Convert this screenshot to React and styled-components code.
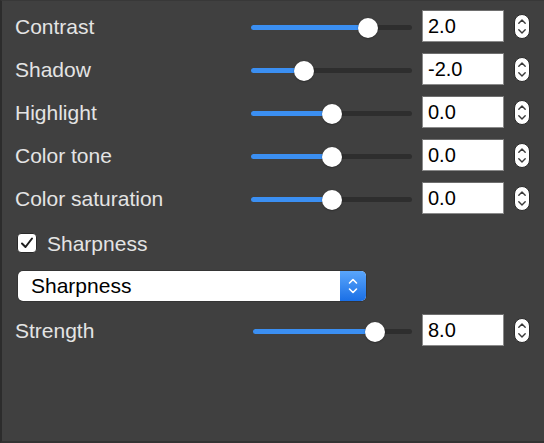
import React from "react";
import styled, { createGlobalStyle } from "styled-components";

const GlobalStyle = createGlobalStyle`
  html, body {
    margin: 0;
    padding: 0;
    background: #404040;
  }
  body {
    font-family: "Liberation Sans", Arial, Helvetica, sans-serif;
  }
`;

const controls = [
  { label: "Contrast", value: "2.0", pos: 0.727 },
  { label: "Shadow", value: "-2.0", pos: 0.329 },
  { label: "Highlight", value: "0.0", pos: 0.503 },
  { label: "Color tone", value: "0.0", pos: 0.503 },
  { label: "Color saturation", value: "0.0", pos: 0.503 },
];

function Stepper() {
  return (
    <StepperBox>
      <svg width="16" height="25" viewBox="0 0 16 25">
        <rect x="0.5" y="0.5" width="15" height="24" rx="7.5" fill="#fff" stroke="#2a2a2a" strokeWidth="1" />
        <path d="M4.8 9.3 L8 6.1 L11.2 9.3" fill="none" stroke="#3a3a3a" strokeWidth="1.4" strokeLinecap="round" strokeLinejoin="round" />
        <path d="M4.8 15.7 L8 18.9 L11.2 15.7" fill="none" stroke="#3a3a3a" strokeWidth="1.4" strokeLinecap="round" strokeLinejoin="round" />
      </svg>
    </StepperBox>
  );
}

function Slider({ pos }) {
  return (
    <SliderWrap>
      <Track>
        <Fill style={{ width: `${pos * 100}%` }} />
        <Thumb style={{ left: `${pos * 100}%` }} />
      </Track>
    </SliderWrap>
  );
}

function ControlRow({ label, value, pos, shift }) {
  return (
    <Row $shift={shift}>
      <Label>{label}</Label>
      <Slider pos={pos} />
      <NumberBox>{value}</NumberBox>
      <Stepper />
    </Row>
  );
}

export default function App() {
  return (
    <>
      <GlobalStyle />
      <Panel>
        {controls.map(c => (
          <ControlRow key={c.label} {...c} />
        ))}
        <CheckRow>
          <CheckBox>
            <svg width="14" height="12" viewBox="0 0 14 12">
              <path d="M2 6.5 L5.5 10 L12 1.5" fill="none" stroke="#1e1e1e" strokeWidth="2" strokeLinecap="round" strokeLinejoin="round" />
            </svg>
          </CheckBox>
          <Label>Sharpness</Label>
        </CheckRow>
        <SelectRow>
          <Select>
            <SelectText>Sharpness</SelectText>
            <SelectArrows>
              <svg width="12" height="18" viewBox="0 0 12 18">
                <path d="M2.5 6 L6 2.5 L9.5 6" fill="none" stroke="#fff" strokeWidth="1.6" strokeLinecap="round" strokeLinejoin="round" />
                <path d="M2.5 12 L6 15.5 L9.5 12" fill="none" stroke="#fff" strokeWidth="1.6" strokeLinecap="round" strokeLinejoin="round" />
              </svg>
            </SelectArrows>
          </Select>
        </SelectRow>
        <ControlRow label="Strength" value="8.0" pos={0.767} shift />
      </Panel>
    </>
  );
}

const Panel = styled.div`
  box-sizing: border-box;
  width: 544px;
  height: 443px;
  background: #404040;
  border-left: 2px solid #2c2c2c;
  border-top: 1px solid #383838;
  border-bottom: 2px solid #333;
  padding: 9px 0 0;
  display: flex;
  flex-direction: column;
  gap: 11px;
`;

const Row = styled.div`
  display: grid;
  grid-template-columns: 1fr ${p => (p.$shift ? "159px" : "161px")} 82px 16px;
  column-gap: 10px;
  align-items: center;
  height: 32px;
  padding: 0 14px 0 13px;
  margin-top: ${p => (p.$shift ? "2px" : "0")};
`;

const Label = styled.div`
  color: #e4e4e4;
  font-size: 21px;
  line-height: 24px;
  padding-top: 2px;
  white-space: nowrap;
`;

const SliderWrap = styled.div`
  height: 20px;
  display: flex;
  align-items: center;
  margin-top: 3px;
`;

const Track = styled.div`
  position: relative;
  width: 100%;
  height: 5px;
  border-radius: 3px;
  background: #2e2e2e;
`;

const Fill = styled.div`
  height: 100%;
  border-radius: 3px;
  background: #3b8ff2;
`;

const Thumb = styled.div`
  position: absolute;
  top: 50%;
  width: 20px;
  height: 20px;
  margin: -10px 0 0 -10px;
  border-radius: 50%;
  background: #fff;
  box-shadow: 0 0.5px 1.5px rgba(0, 0, 0, 0.5);
`;

const NumberBox = styled.div`
  box-sizing: border-box;
  height: 32px;
  background: #fff;
  border: 1px solid #8a8a8a;
  border-top-color: #6e6e6e;
  color: #000;
  font-size: 20px;
  line-height: 30px;
  padding-left: 5px;
`;

const StepperBox = styled.div`
  display: flex;
  height: 25px;
`;

const CheckRow = styled.div`
  display: flex;
  align-items: center;
  gap: 10px;
  height: 24px;
  padding-left: 15px;
  margin-top: 6px;
`;

const CheckBox = styled.div`
  box-sizing: border-box;
  width: 20px;
  height: 20px;
  border-radius: 4px;
  background: #fff;
  border: 1px solid #2a2a2a;
  display: flex;
  align-items: center;
  justify-content: center;
`;

const SelectRow = styled.div`
  padding-left: 16px;
  margin-top: 5px;
`;

const Select = styled.div`
  box-sizing: border-box;
  width: 348px;
  height: 30px;
  border-radius: 5px;
  background: #fff;
  display: flex;
  align-items: stretch;
  overflow: hidden;
  box-shadow: 0 0 0 0.5px #2a2a2a;
`;

const SelectText = styled.div`
  flex: 1;
  color: #000;
  font-size: 21px;
  line-height: 30px;
  padding-left: 13px;
`;

const SelectArrows = styled.div`
  width: 26px;
  display: flex;
  align-items: center;
  justify-content: center;
  background: linear-gradient(#5aa6fb, #1a6fe6);
`;
